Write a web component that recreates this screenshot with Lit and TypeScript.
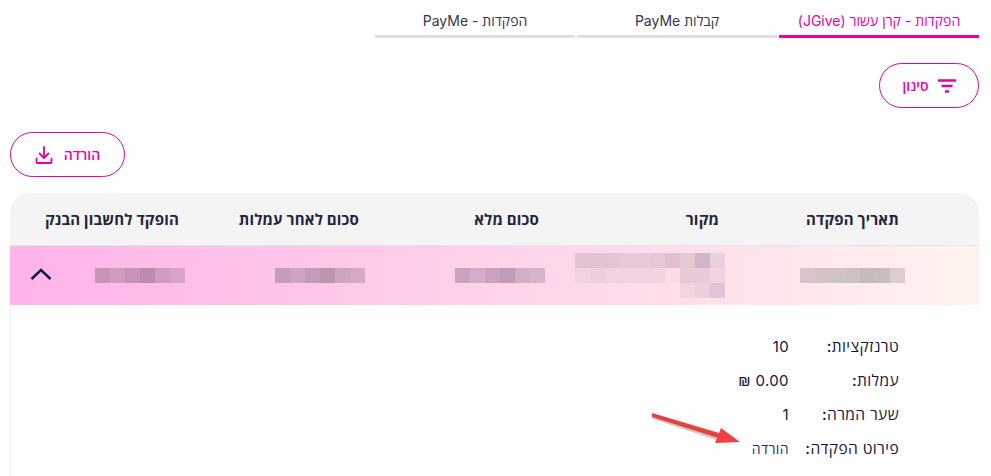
import { LitElement, html, css } from "lit";
import { customElement } from "lit/decorators.js";

const CELL = 15;
type Colors = (string | null)[][];

const bank: Colors = [["#d8a3c8", "#cd9cc0", "#bb8bad", "#c893b8", "#cf9dc2", "#c794b9"]];
const net: Colors = [["#d3a9c6", "#cda5c1", "#bd94af", "#c59cb8", "#cfa3c3", "#c69db9"]];
const full: Colors = [["#d7b2cb", "#d3adc6", "#c19cb4", "#c9a2bd", "#d5acc8", "#c9a2bd"]];
const date: Colors = [["#dccdcd", "#c9bcbc", "#c6baba", "#cdc1c1", "#cfc3c3", "#d2c4c5", "#d9c5c9"]];
const source: Colors = [
  ["#e8d1dc", "#ceb6c6", "#e3c9d6", "#e0c0cf", "#e4c6d5", "#e6c8d8", "#e6c8d8", "#e4c4d4", "#e3c3d3", "#e3c3d3"],
  ["#efd3e0", "#e5cad8", "#e5cad8", "#fbdbe8", "#f1d2e1", "#f1d2e1", "#f1d2e1", "#f1d2e1", "#edcfde", "#f1d2e2"],
  ["#dfc6d4", "#eacfdd", "#f3d5e2", null, null, null, null, null, null, null],
];

@customElement("app-root")
export class AppRoot extends LitElement {
  static styles = css`
    :host {
      display: block;
      position: relative;
      width: 991px;
      height: 476px;
      overflow: hidden;
      background: #fff;
      color: #1f2240;
      font-family: "Inter", "Open Sans", "DejaVu Sans", sans-serif;
    }
    .page {
      direction: rtl;
      padding: 0 12px 0 10px;
    }
    .tabs {
      display: flex;
      gap: 2px;
      padding-left: 365px;
      padding-top: 6px;
    }
    .tab {
      flex: 1;
      height: 29px;
      border-bottom: 3px solid #e0e0e4;
      font-size: 14px;
      line-height: 30px;
      text-align: center;
      color: #33354a;
      white-space: nowrap;
    }
    .tab.on {
      color: #e900a4;
      border-bottom-color: #e900a4;
    }
    .filter-row {
      display: flex;
      padding-top: 25px;
    }
    .btn {
      display: flex;
      align-items: center;
      justify-content: center;
      box-sizing: border-box;
      height: 45px;
      border: 1px solid #e900a4;
      border-radius: 23px;
      background: #fff;
      color: #e900a4;
      font-size: 14px;
      font-weight: 600;
    }
    .filter {
      width: 100px;
      gap: 9px;
    }
    .download {
      width: 115px;
      gap: 11px;
    }
    .dl-row {
      display: flex;
      justify-content: flex-end;
      padding-top: 24px;
    }
    .table {
      margin-top: 16px;
    }
    .thead,
    .row {
      display: grid;
      grid-template-columns: 180px 180px 180px 180px 1fr;
      align-items: center;
    }
    .thead {
      height: 52px;
      padding-right: 80px;
      background: #f4f4f4;
      border-radius: 20px 20px 0 0;
      border-bottom: 1px solid #e2e6ea;
      font-size: 15px;
      font-weight: 700;
      letter-spacing: 0.2px;
      color: #23253a;
      white-space: nowrap;
    }
    .row {
      height: 59px;
      padding-right: 74px;
      background: linear-gradient(270deg, #fff3ee 0%, #ffd9ea 40%, #ffb3e8 100%);
    }
    .cell {
      display: flex;
      align-items: center;
    }
    .last {
      justify-content: space-between;
    }
    .grid {
      display: grid;
      grid-auto-rows: 15px;
    }
    .chev {
      margin-left: 19px;
      margin-top: -3px;
    }
    .panel {
      height: 171px;
      box-sizing: border-box;
      border-left: 1px solid #eceef1;
      padding-top: 24px;
      font-size: 15.500px;
      letter-spacing: 0.4px;
      color: #14163a;
    }
    .line {
      display: flex;
      height: 34px;
      align-items: center;
      padding-right: 80px;
    }
    .k {
      width: 110px;
      font-weight: 500;
    }
    .val {
      font-size: 15px;
    }
    .link {
      font-size: 14px;
      font-weight: 400;
      color: #232f6b;
    }
    .arrow {
      position: absolute;
      left: 650px;
      top: 410px;
    }
  `;

  private pix(colors: Colors) {
    const cols = colors[0].length;
    return html`<div class="grid" style="grid-template-columns: repeat(${cols}, ${CELL}px)">
      ${colors.flat().map((c) => html`<div style="background: ${c ?? "transparent"}"></div>`)}
    </div>`;
  }

  render() {
    return html`
      <div class="page">
        <div class="tabs">
          <div class="tab on">הפקדות - קרן עשור (JGive)</div>
          <div class="tab">קבלות PayMe</div>
          <div class="tab">הפקדות - PayMe</div>
        </div>
        <div class="filter-row">
          <div class="btn filter">
            <svg width="18" height="14" viewBox="0 0 18 14" fill="none" stroke="#e900a4" stroke-width="2.400">
              <path d="M0 1.500h18M3.500 7h11M7 12.500h4" />
            </svg>
            <span>סינון</span>
          </div>
        </div>
        <div class="dl-row">
          <div class="btn download">
            <span>הורדה</span>
            <svg width="18" height="18" viewBox="0 0 18 18" fill="none" stroke="#e900a4" stroke-width="1.800" stroke-linecap="round" stroke-linejoin="round">
              <path d="M9 1v10.500M4.500 7.500 9 12l4.500-4.500M1.500 12.500V16a1 1 0 0 0 1 1h13a1 1 0 0 0 1-1v-3.500" />
            </svg>
          </div>
        </div>
        <div class="table">
          <div class="thead">
            <div>תאריך הפקדה</div>
            <div>מקור</div>
            <div>סכום מלא</div>
            <div>סכום לאחר עמלות</div>
            <div>הופקד לחשבון הבנק</div>
          </div>
          <div class="row">
            <div class="cell">${this.pix(date)}</div>
            <div class="cell">${this.pix(source)}</div>
            <div class="cell">${this.pix(full)}</div>
            <div class="cell">${this.pix(net)}</div>
            <div class="cell last">
              ${this.pix(bank)}
              <svg class="chev" width="24" height="14" viewBox="0 0 24 14" fill="none" stroke="#141a48" stroke-width="2.500">
                <path d="M2.500 12 12 3l9.500 9" />
              </svg>
            </div>
          </div>
          <div class="panel">
            <div class="line"><span class="k">טרנזקציות:</span><span class="val">10</span></div>
            <div class="line"><span class="k">עמלות:</span><span class="val">0.00 ₪</span></div>
            <div class="line"><span class="k">שער המרה:</span><span class="val">1</span></div>
            <div class="line"><span class="k">פירוט הפקדה:</span><span class="link">הורדה</span></div>
          </div>
        </div>
      </div>
      <svg class="arrow" width="100" height="40" viewBox="0 0 100 40">
        <path d="M2 6 68 28 66 30 3 9Z" fill="#8a8a8a" opacity="0.45" />
        <path d="M2 3 69 23 68 28 2 7Z" fill="#e8413e" />
        <path d="M90 32 65 33 71 18Z" fill="#ee4040" />
      </svg>
    `;
  }
}
